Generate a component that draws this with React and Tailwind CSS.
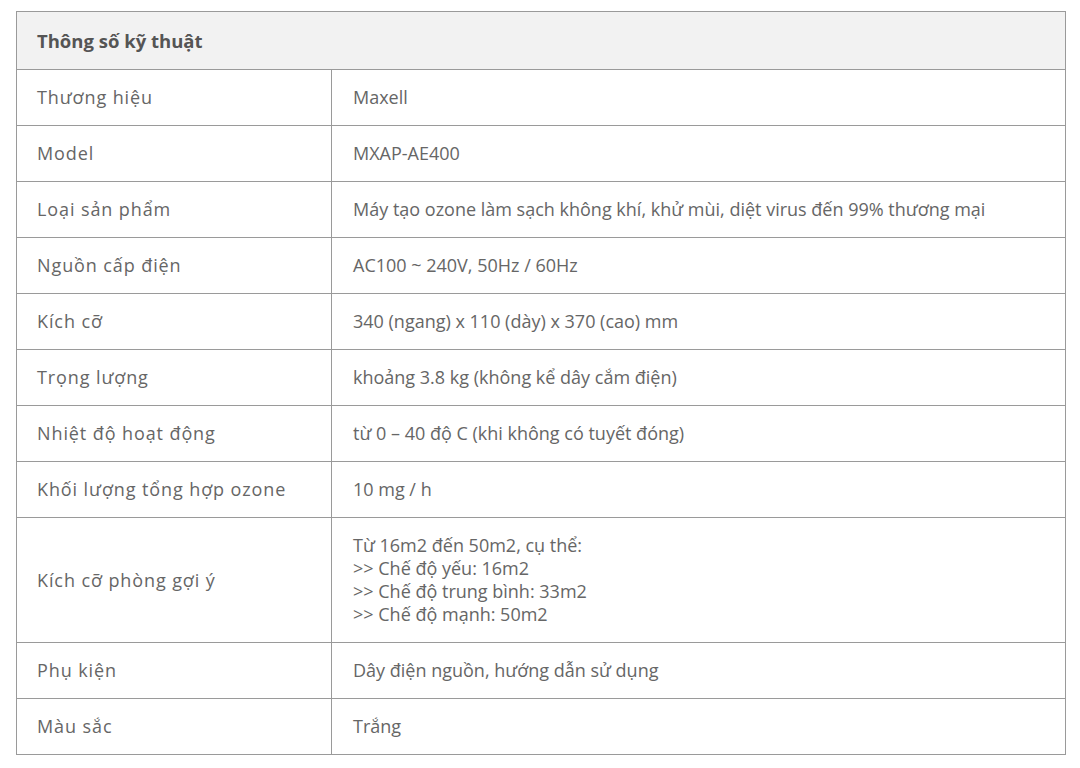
export default function App() {
  const rows = [
    ["Thương hiệu", ["Maxell"]],
    ["Model", ["MXAP-AE400"]],
    ["Loại sản phẩm", ["Máy tạo ozone làm sạch không khí, khử mùi, diệt virus đến 99% thương mại"]],
    ["Nguồn cấp điện", ["AC100 ~ 240V, 50Hz / 60Hz"]],
    ["Kích cỡ", ["340 (ngang) x 110 (dày) x 370 (cao) mm"]],
    ["Trọng lượng", ["khoảng 3.8 kg (không kể dây cắm điện)"]],
    ["Nhiệt độ hoạt động", ["từ 0 – 40 độ C (khi không có tuyết đóng)"]],
    ["Khối lượng tổng hợp ozone", ["10 mg / h"]],
    ["Kích cỡ phòng gợi ý", ["Từ 16m2 đến 50m2, cụ thể:", ">> Chế độ yếu: 16m2", ">> Chế độ trung bình: 33m2", ">> Chế độ mạnh: 50m2"]],
    ["Phụ kiện", ["Dây điện nguồn, hướng dẫn sử dụng"]],
    ["Màu sắc", ["Trắng"]],
  ];
  return (
    <div className="w-[1080px] h-[768px] bg-white pt-[11px] pl-[16px]" style={{ fontFamily: '"Open Sans", sans-serif' }}>
      <div className="w-[1050px] border border-[#9a9a9a] text-[#666]">
        <div className="bg-[#f2f2f2] border-b border-[#9a9a9a] px-5 py-4 text-[18.5px] leading-[25px] font-bold text-[#555]">
          Thông số kỹ thuật
        </div>
        {rows.map(([k, v], i) => (
          <div key={i} className={`flex ${i < rows.length - 1 ? "border-b border-[#9a9a9a]" : ""}`}>
            <div className="w-[315px] shrink-0 border-r border-[#9a9a9a] px-5 py-4 flex items-center text-[18px] leading-[23px] tracking-[0.9px]">
              {k}
            </div>
            <div className="flex-1 px-[21px] py-4 text-[18px] leading-[23px]">
              {v.map((line, j) => (
                <div key={j}>{line}</div>
              ))}
            </div>
          </div>
        ))}
      </div>
    </div>
  );
}
